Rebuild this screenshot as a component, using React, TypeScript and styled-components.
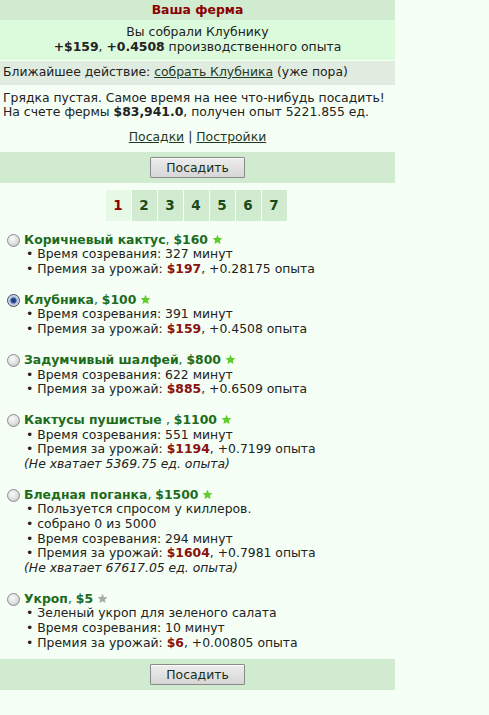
import React, { useState } from "react";
import styled, { createGlobalStyle } from "styled-components";

const GlobalStyle = createGlobalStyle`
  html, body {
    margin: 0;
    padding: 0;
    background: #f5fff5;
  }
  body {
    font-family: "DejaVu Sans", Verdana, sans-serif;
    font-size: 12.4px;
    line-height: 14.6px;
    color: #222;
  }
`;

const Page = styled.div`
  width: 395px;
`;

const TitleBar = styled.div`
  height: 20px;
  line-height: 19px;
  background: #d0ebd0;
  text-align: center;
  font-weight: bold;
  color: #8b0000;
`;

const Message = styled.div`
  background: #dcfadc;
  text-align: center;
  padding: 5px 0 6px;
  margin-bottom: 1px;
`;

const NextAction = styled.div`
  background: #e1ece1;
  padding: 4px 3px 5px;
`;

const Info = styled.div`
  padding: 6px 3px 0;
`;

const Link = styled.a`
  color: #1f3a1f;
  text-decoration: underline;
  cursor: pointer;
`;

const Links = styled.div`
  text-align: center;
  padding: 10px 0 7px;
`;

const ButtonBar = styled.div`
  background: #d0ebd0;
  height: 31px;
  display: flex;
  align-items: center;
  justify-content: center;
`;

const PlantButton = styled.button`
  width: 95px;
  height: 21px;
  padding: 0;
  font-family: inherit;
  font-size: 12.4px;
  color: #1a2e1a;
  border: 1px solid #8a8a8a;
  border-radius: 1px;
  background: linear-gradient(#ededed, #d6d6d6);
  box-shadow: inset 0 1px 0 #fafafa;
`;

const Pager = styled.div`
  display: flex;
  justify-content: center;
  gap: 1px;
  margin: 7px 0 12px;
  padding-right: 3px;
`;

const PageTab = styled.div<{ $active?: boolean }>`
  width: 25px;
  height: 31px;
  display: flex;
  align-items: center;
  justify-content: center;
  font-weight: bold;
  font-size: 13.5px;
  background: ${(p) => (p.$active ? "#e6f9e6" : "#d0ebd0")};
  color: ${(p) => (p.$active ? "#8b0000" : "#1a4a1a")};
`;

const Item = styled.label`
  display: block;
  padding-left: 24px;
  position: relative;
  margin-bottom: 16.4px;

  &:last-of-type {
    margin-bottom: 9px;
  }
`;

const Radio = styled.input`
  appearance: none;
  position: absolute;
  left: 7px;
  top: 1px;
  width: 13px;
  height: 13px;
  margin: 0;
  border-radius: 50%;
  border: 1px solid #8c8c8c;
  background: radial-gradient(circle at 40% 35%, #fbfbfb 0%, #dedede 55%, #b8b8b8 100%);

  &:checked {
    border-color: #3b4a66;
    background: radial-gradient(circle at 50% 50%, #1d3570 0%, #2b4d96 30%, #aab8d4 45%, #e4e8ef 75%, #c0c6d2 100%);
  }
`;

const Name = styled.div`
  color: #1d6b1d;
`;

const Star = styled.svg`
  width: 11px;
  height: 11px;
  margin-left: 4px;
  vertical-align: -1px;
`;

const Line = styled.div`
  padding-left: 2px;
`;

const Bonus = styled.b`
  color: #8b1010;
`;

const Missing = styled.div`
  font-style: italic;
`;

type Crop = {
  name: string;
  price: number;
  star: boolean;
  notes?: string[];
  minutes: number;
  bonus: number;
  exp: string;
  missing?: string;
};

const crops: Crop[] = [
  { name: "Коричневый кактус", price: 160, star: true, minutes: 327, bonus: 197, exp: "0.28175" },
  { name: "Клубника", price: 100, star: true, minutes: 391, bonus: 159, exp: "0.4508" },
  { name: "Задумчивый шалфей", price: 800, star: true, minutes: 622, bonus: 885, exp: "0.6509" },
  {
    name: "Кактусы пушистые ",
    price: 1100,
    star: true,
    minutes: 551,
    bonus: 1194,
    exp: "0.7199",
    missing: "5369.75",
  },
  {
    name: "Бледная поганка",
    price: 1500,
    star: true,
    notes: ["Пользуется спросом у киллеров.", "собрано 0 из 5000"],
    minutes: 294,
    bonus: 1604,
    exp: "0.7981",
    missing: "67617.05",
  },
  {
    name: "Укроп",
    price: 5,
    star: false,
    notes: ["Зеленый укроп для зеленого салата"],
    minutes: 10,
    bonus: 6,
    exp: "0.00805",
  },
];

const StarIcon = ({ on }: { on: boolean }) => (
  <Star viewBox="0 0 24 24">
    <path
      d="M12 1.5l3.1 7.2 7.8.6-5.9 5.1 1.8 7.6L12 17.9 5.2 22l1.8-7.6-5.9-5.1 7.8-.6z"
      fill={on ? "#5fcc2a" : "#a8aca8"}
    />
  </Star>
);

export default function App() {
  const [selected, setSelected] = useState(1);
  const [page, setPage] = useState(1);

  return (
    <Page>
      <GlobalStyle />
      <TitleBar>Ваша ферма</TitleBar>
      <Message>
        Вы собрали Клубнику
        <br />
        <b>+$159</b>, <b>+0.4508</b> производственного опыта
      </Message>
      <NextAction>
        Ближайшее действие: <Link>собрать Клубника</Link> (уже пора)
      </NextAction>
      <Info>
        Грядка пустая. Самое время на нее что-нибудь посадить!
        <br />
        На счете фермы <b>$83,941.0</b>, получен опыт 5221.855 ед.
      </Info>
      <Links>
        <Link>Посадки</Link> | <Link>Постройки</Link>
      </Links>
      <ButtonBar>
        <PlantButton>Посадить</PlantButton>
      </ButtonBar>
      <Pager>
        {[1, 2, 3, 4, 5, 6, 7].map((n) => (
          <PageTab key={n} $active={n === page} onClick={() => setPage(n)}>
            {n}
          </PageTab>
        ))}
      </Pager>
      <div>
        {crops.map((c, i) => (
          <Item key={c.name}>
            <Radio
              type="radio"
              name="crop"
              checked={selected === i}
              onChange={() => setSelected(i)}
            />
            <Name>
              <b>{c.name}</b>, <b>${c.price}</b>
              <StarIcon on={c.star} />
            </Name>
            {c.notes?.map((n) => (
              <Line key={n}>• {n}</Line>
            ))}
            <Line>• Время созревания: {c.minutes} минут</Line>
            <Line>
              • Премия за урожай: <Bonus>${c.bonus}</Bonus>, +{c.exp} опыта
            </Line>
            {c.missing && <Missing>(Не хватает {c.missing} ед. опыта)</Missing>}
          </Item>
        ))}
      </div>
      <ButtonBar>
        <PlantButton>Посадить</PlantButton>
      </ButtonBar>
    </Page>
  );
}
